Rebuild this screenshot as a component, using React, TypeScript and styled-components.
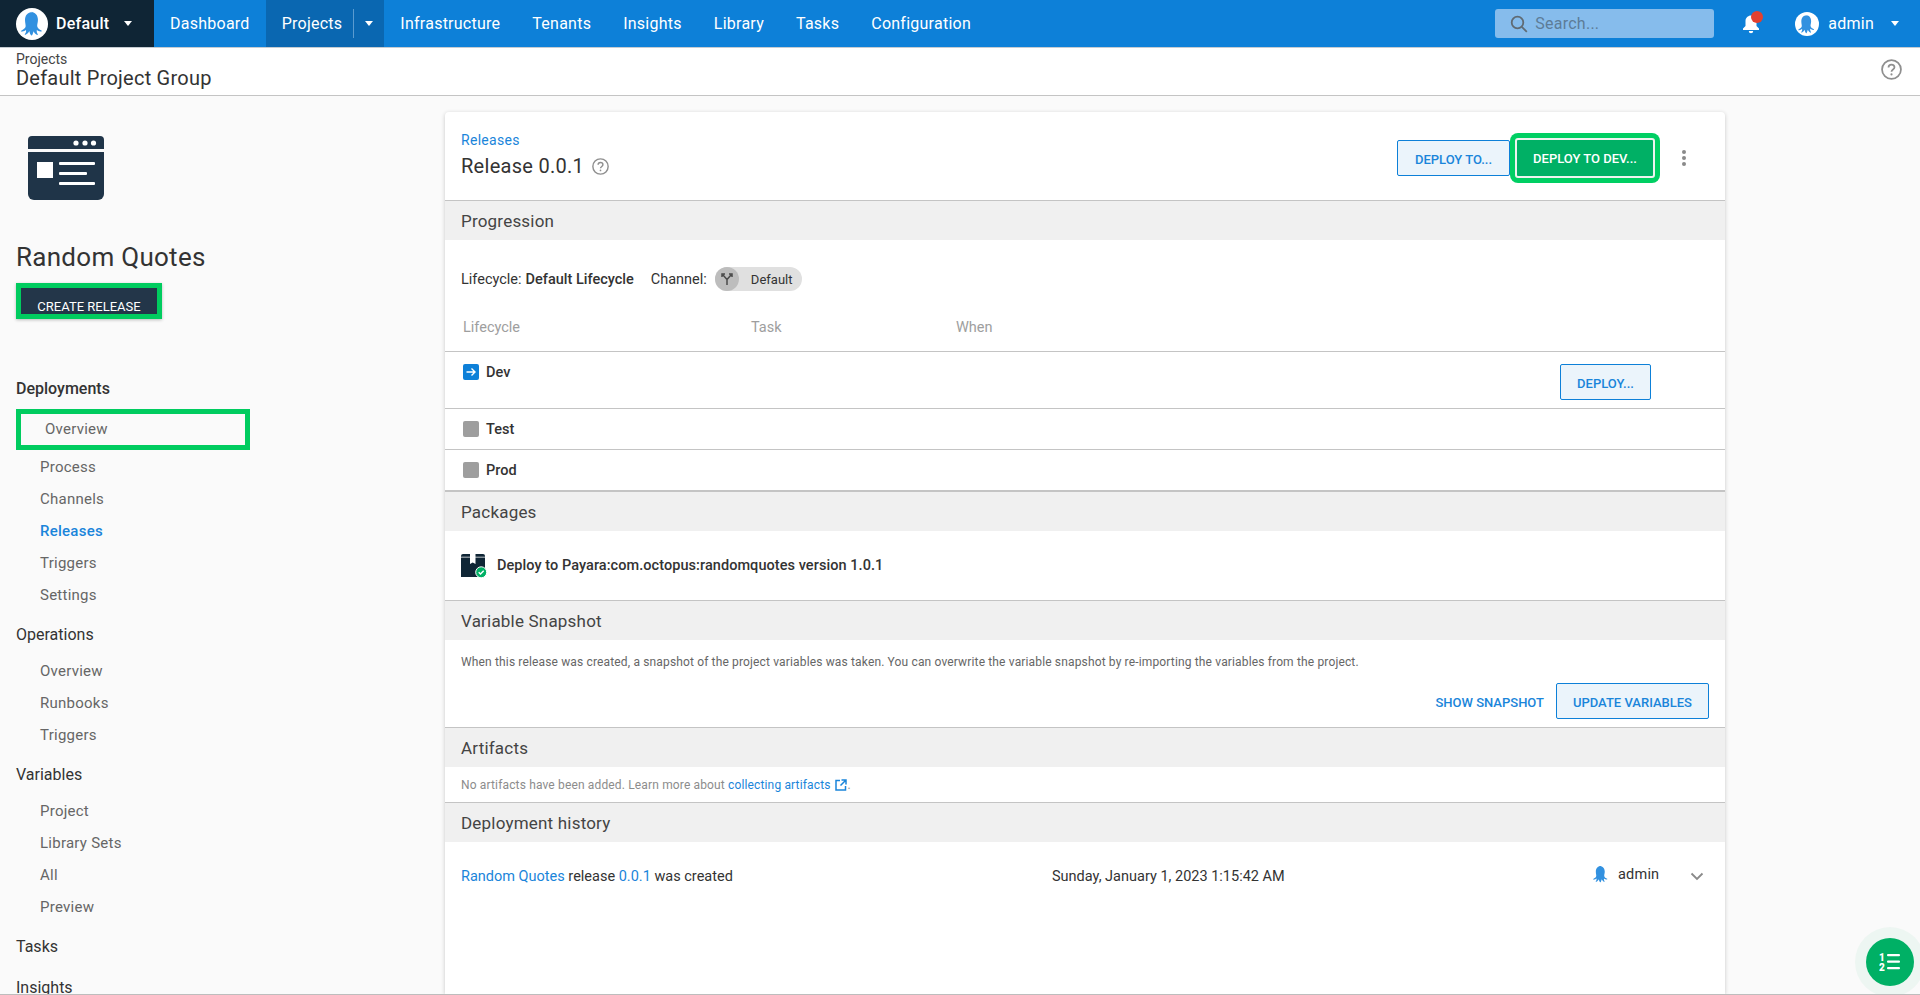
import React from "react";
import styled, { createGlobalStyle } from "styled-components";

const GlobalStyle = createGlobalStyle`
  html, body {
    margin: 0;
    height: 100%;
    overflow: hidden;
    background: #fafafa;
    font-family: Roboto, "Liberation Sans", sans-serif;
    color: #333;
  }
`;

const Page = styled.div`
  height: 995px;
  overflow: hidden;
  display: flex;
  flex-direction: column;
  box-sizing: border-box;
  border-bottom: 1px solid #bdbdbd;
  position: relative;
`;

const TopBar = styled.header`
  height: 48px;
  box-sizing: border-box;
  flex: none;
  display: flex;
  align-items: stretch;
  background: #0d80d8;
  color: #fff;
  font-size: 16px;
  letter-spacing: 0.25px;
  border-bottom: 1px solid #c5ccd2;
`;

const SpaceSwitch = styled.div`
  width: 154px;
  flex: none;
  background: #0f2535;
  display: flex;
  align-items: center;
  padding-left: 16px;
  box-sizing: border-box;
  font-weight: 500;
`;

const SpaceName = styled.span`
  margin-left: 8px;
`;

const Avatar = styled.span<{ $size: number }>`
  width: ${(p) => p.$size}px;
  height: ${(p) => p.$size}px;
  border-radius: 50%;
  background: #fff;
  display: flex;
  align-items: center;
  justify-content: center;
  flex: none;
`;

const Caret = styled.span<{ $left?: number }>`
  width: 0;
  height: 0;
  border-left: 4.5px solid transparent;
  border-right: 4.5px solid transparent;
  border-top: 5px solid #fff;
  margin-left: ${(p) => p.$left ?? 0}px;
`;

const NavItem = styled.a<{ $active?: boolean }>`
  display: flex;
  align-items: center;
  padding: ${(p) => (p.$active ? "0 11px 0 16px" : "0 16px")};
  background: ${(p) => (p.$active ? "#0a67b1" : "transparent")};
`;

const NavDivider = styled.span`
  width: 1px;
  height: 29px;
  background: #5a9bd0;
  margin: 0 11px 0 11px;
`;

const SearchBox = styled.div`
  margin: 9px 0 0 auto;
  width: 219px;
  height: 29px;
  border-radius: 3px;
  background: #86bcec;
  display: flex;
  align-items: center;
  padding-left: 15px;
  box-sizing: border-box;
  color: #5d7c98;
  gap: 7px;
`;

const Bell = styled.div`
  width: 24px;
  margin-left: 28px;
  display: flex;
  align-items: center;
  position: relative;
`;

const BellDot = styled.span`
  position: absolute;
  top: 11px;
  left: 9px;
  width: 12px;
  height: 12px;
  border-radius: 50%;
  background: #e2402f;
`;

const UserMenu = styled.div`
  display: flex;
  align-items: center;
  margin-left: 29px;
  padding-right: 21px;
`;

const UserName = styled.span`
  margin-left: 9px;
`;

const SubHeader = styled.div`
  height: 48px;
  flex: none;
  background: #fff;
  border-bottom: 1px solid #c4c4c4;
  box-sizing: border-box;
  padding: 3px 16px 0;
  display: flex;
  justify-content: space-between;
`;

const Crumb = styled.div`
  font-size: 14px;
  line-height: 16px;
  color: #444;
`;

const GroupTitle = styled.div`
  font-size: 20px;
  line-height: 23px;
  letter-spacing: 0.23px;
  color: #333;
`;

const HelpWrap = styled.div`
  margin: 8px 2px 0 0;
  color: #8f8f8f;
`;

const Body = styled.div`
  flex: 1;
  display: flex;
  min-height: 0;
`;

const Sidebar = styled.aside`
  width: 445px;
  flex: none;
  box-sizing: border-box;
  padding: 40px 16px 0;
`;

const ProjectLogo = styled.div`
  padding-left: 12px;
  height: 64px;
`;

const ProjectName = styled.h1`
  margin: 41px 0 0;
  font-size: 26px;
  font-weight: 400;
  line-height: 32px;
  letter-spacing: 0.28px;
  color: #333;
`;

const CreateButton = styled.div`
  margin-top: 10px;
  width: 146px;
  height: 36px;
  box-sizing: border-box;
  border: 5px solid #00cc5f;
  background: #233649;
  color: #fff;
  font-size: 13px;
  font-weight: 400;
  text-align: center;
  line-height: 38px;
  overflow: hidden;
  box-shadow: 0 1px 3px rgba(0, 0, 0, 0.25);
`;

const SideNav = styled.nav`
  margin-top: 54px;
`;

const NavHeading = styled.div<{ $strong?: boolean; $group?: boolean }>`
  height: 32px;
  line-height: 32px;
  margin-top: 8.5px;
  margin-bottom: ${(p) => (p.$group ? 3.5 : 0)}px;
  font-size: 16px;
  color: #333;
  font-weight: ${(p) => (p.$strong ? 500 : 400)};
`;

const NavLink = styled.div<{ $active?: boolean }>`
  height: 32px;
  line-height: 32px;
  padding-left: 24px;
  font-size: 15px;
  letter-spacing: 0.25px;
  color: ${(p) => (p.$active ? "#1a85da" : "#666")};
  font-weight: ${(p) => (p.$active ? 500 : 400)};
`;

const FocusLink = styled.div`
  width: 234px;
  height: 41px;
  box-sizing: border-box;
  border: 5px solid #00cc5f;
  padding-left: 24px;
  font-size: 15px;
  letter-spacing: 0.25px;
  line-height: 31px;
  color: #666;
  margin-bottom: 1px;
`;

const Card = styled.main`
  width: 1280px;
  margin-top: 16px;
  flex: none;
  background: #fff;
  border-radius: 4px 4px 0 0;
  box-shadow: 0 1px 4px rgba(0, 0, 0, 0.2);
  align-self: stretch;
`;

const CardHead = styled.div`
  height: 88px;
  box-sizing: border-box;
  padding: 18px 16px 0;
  display: flex;
  justify-content: space-between;
`;

const Breadcrumb = styled.a`
  display: block;
  font-size: 14px;
  letter-spacing: 0.3px;
  line-height: 20px;
  color: #1a85da;
`;

const TitleRow = styled.div`
  display: flex;
  align-items: center;
  gap: 8px;
  font-size: 20px;
  letter-spacing: 0.28px;
  line-height: 32px;
  color: #333;
`;

const TitleHelp = styled.span`
  display: flex;
  color: #8f8f8f;
`;

const HeadActions = styled.div`
  display: flex;
  align-items: flex-start;
  margin-right: 23px;
`;

const OutlineButton = styled.button`
  height: 36px;
  padding: 2px 16px 0;
  border: 1px solid #0d80d8;
  border-radius: 2px;
  background: #ebf4fb;
  color: #1a85da;
  font: 500 13px Roboto, sans-serif;
  text-transform: uppercase;
`;

const DeployToButton = styled(OutlineButton)`
  margin-top: 10px;
  width: 113px;
`;

const RowButton = styled(OutlineButton)`
  width: 91px;
`;

const Ring = styled.div`
  margin-top: 3px;
  padding: 5px;
  border-radius: 8px;
  background: #00cf63;
`;

const PrimaryButton = styled.button`
  display: block;
  width: 140px;
  height: 40px;
  padding: 1px 0 0;
  border: 2px solid #eef3ef;
  border-radius: 3px;
  background: #00b065;
  color: #fff;
  font: 500 13px Roboto, sans-serif;
  text-transform: uppercase;
`;

const MenuDots = styled.div`
  margin: 20px 0 0 22px;
  display: flex;
  flex-direction: column;
  gap: 2px;
`;

const Dot = styled.span`
  width: 4px;
  height: 4px;
  border-radius: 50%;
  background: #8a8a8a;
`;

const SectionBand = styled.h2<{ $heavy?: boolean }>`
  margin: 0;
  height: ${(p) => (p.$heavy ? 41 : 40)}px;
  box-sizing: border-box;
  padding-left: 16px;
  background: #f0f0f0;
  border-top: ${(p) => (p.$heavy ? 2 : 1)}px solid #c4c4c4;
  font-size: 17px;
  font-weight: 400;
  line-height: 40px;
  letter-spacing: 0.2px;
  color: #444;
`;

const MetaLine = styled.div`
  height: 69px;
  padding: 9px 16px 0;
  display: flex;
  align-items: center;
  box-sizing: border-box;
  font-size: 14.5px;
`;

const Bold = styled.b`
  font-weight: 500;
  margin-left: 4px;
`;

const ChannelLabel = styled.span`
  margin: 0 8px 0 17px;
`;

const Chip = styled.span`
  width: 87px;
  height: 24px;
  border-radius: 12px;
  background: #e0e0e0;
  display: flex;
  align-items: center;
  font-size: 13px;
`;

const ChipIcon = styled.span`
  width: 24px;
  height: 24px;
  border-radius: 50%;
  background: #bdbdbd;
  display: flex;
  align-items: center;
  justify-content: center;
  margin-right: 12px;
`;

const TableHead = styled.div`
  height: 42px;
  display: grid;
  grid-template-columns: 288px 205px 1fr;
  padding: 0 18px 6px;
  align-items: center;
  box-sizing: border-box;
  color: #9e9e9e;
  font-size: 14.5px;
`;

const StageRow = styled.div<{ $tall?: boolean }>`
  height: ${(p) => (p.$tall ? 57 : 41)}px;
  box-sizing: border-box;
  border-top: 1px solid #c4c4c4;
  padding: ${(p) => (p.$tall ? "12px 74px 0 18px" : "0 18px")};
  display: flex;
  align-items: ${(p) => (p.$tall ? "flex-start" : "center")};
  justify-content: space-between;
`;

const StageName = styled.div`
  display: flex;
  align-items: flex-start;
  height: 16px;
  gap: 7px;
  font-size: 14.5px;
  font-weight: 500;
  color: #333;
  line-height: 18px;
`;

const StageStatus = styled.span<{ $running?: boolean }>`
  width: 16px;
  height: 16px;
  border-radius: 2px;
  background: ${(p) => (p.$running ? "#0d80d8" : "#9e9e9e")};
  display: flex;
  align-items: center;
  justify-content: center;
`;

const PackageRow = styled.div`
  height: 69px;
  padding: 0 16px;
  display: flex;
  align-items: center;
  gap: 10px;
  font-size: 14.5px;
  letter-spacing: 0.06px;
  font-weight: 500;
  color: #333;
`;

const SmallNote = styled.div`
  padding: 14px 16px 0;
  font-size: 12px;
  letter-spacing: 0.15px;
  line-height: 16px;
  color: #666;
`;

const SnapshotBody = styled.div`
  height: 87px;
`;

const SnapshotActions = styled.div`
  margin: 13px 16px 0;
  display: flex;
  justify-content: flex-end;
  align-items: center;
  gap: 12px;
`;

const TextButton = styled.span`
  color: #1a85da;
  font-size: 13px;
  font-weight: 500;
  text-transform: uppercase;
  padding-top: 2px;
`;

const ArtifactsBody = styled.div`
  height: 35px;
  padding: 0 16px;
  display: flex;
  align-items: center;
  font-size: 12px;
  letter-spacing: 0.15px;
  color: #8c8c8c;
`;

const InlineLink = styled.a<{ $flush?: boolean }>`
  color: #1a85da;
  margin-left: ${(p) => (p.$flush ? 0 : 3)}px;
`;

const ExternalIcon = styled.span`
  display: flex;
  color: #1a85da;
  margin: 0 1px 0 4px;
`;

const HistoryRow = styled.div`
  height: 68px;
  box-sizing: border-box;
  padding: 1px 16px 0;
  display: grid;
  grid-template-columns: 591px 541px 97px 1fr;
  align-items: center;
  font-size: 14.5px;
  color: #333;
`;

const HistoryUser = styled.div`
  display: flex;
  align-items: center;
  gap: 7px;
  margin: -5px 0 0 -2px;
  font-size: 14.5px;
  letter-spacing: 0.2px;
`;

const HistoryChevron = styled.div`
  display: flex;
  color: #8a8a8a;
`;

const Fab = styled.div`
  position: absolute;
  right: 6px;
  bottom: 8px;
  width: 48px;
  height: 48px;
  border-radius: 50%;
  background: #00b065;
  box-shadow: 0 0 0 11px rgba(0, 176, 101, 0.05);
  display: flex;
  align-items: center;
  justify-content: center;
`;

const OCTOPUS =
  "M12 2.500C7.800 2.500 5.800 5.600 5.800 9.200c0 2.600.7 3.900.5 5.300-.2 1.500-1.900 2.600-3.600 3.400-.6.4-.2.9.7.8 1.400-.1 2.400-.8 3.200-1.300.4 1.200-.2 2.500-.9 3.300-.4.6.2.9.9.5 1.400-.7 2.200-1.900 2.800-2.900.3 1.300.5 2.500 1.400 3.400.4.400.7.400 1-.1.500-1 .7-2.200 1.100-3.200.5 1 1.300 2.300 2.600 2.900.7.300 1.200 0 .8-.6-.6-.9-1-2.200-.7-3.400.8.5 1.800 1.200 3.100 1.300.9.1 1.300-.4.700-.8-1.600-.8-3.300-1.900-3.500-3.500-.2-1.400.6-2.700.6-5.300 0-3.600-2.100-6.700-6.500-6.700z";

const Octopus = ({ size }: { size: number }) => (
  <svg width={size} height={size} viewBox="0 0 24 24">
    <path d={OCTOPUS} fill="#3291e0" />
  </svg>
);

const Help = ({ size }: { size: number }) => (
  <svg width={size} height={size} viewBox="0 0 24 24" fill="none" stroke="currentColor">
    <circle cx="12" cy="12" r="10.800" strokeWidth="2" />
    <path d="M8.600 9.600c0-2 1.500-3.200 3.400-3.200s3.400 1.200 3.400 3c0 2.600-3.400 2.500-3.400 5.200" strokeWidth="2" />
    <circle cx="12" cy="17.600" r="1.200" fill="currentColor" stroke="none" />
  </svg>
);

const ReleaseIcon = () => (
  <svg width="76" height="64" viewBox="0 0 76 64">
    <path d="M4 0h68a4 4 0 0 1 4 4v9H0V4a4 4 0 0 1 4-4z" fill="#1f3448" />
    <path d="M0 16h76v42a6 6 0 0 1-6 6H6a6 6 0 0 1-6-6z" fill="#1f3448" />
    <circle cx="48" cy="7" r="2.600" fill="#fff" />
    <circle cx="57" cy="7" r="2.600" fill="#fff" />
    <circle cx="65.500" cy="7" r="2.600" fill="#fff" />
    <rect x="9" y="26" width="16" height="16" fill="#fff" />
    <rect x="31" y="26" width="36" height="3" rx="1" fill="#fff" />
    <rect x="31" y="36" width="28" height="3" rx="1" fill="#fff" />
    <rect x="31" y="46" width="36" height="3" rx="1" fill="#fff" />
  </svg>
);

const PackageIcon = () => (
  <svg width="26" height="24" viewBox="0 0 26 24">
    <path d="M2 0h7v2.800H0V2a2 2 0 0 1 2-2zM14.500 0H22a2 2 0 0 1 2 2v.8h-9.500z" fill="#0f2535" />
    <path d="M0 3.600h9V10l2.750-1.500L14.500 10V3.600H24V23H0z" fill="#0f2535" />
    <circle cx="20.200" cy="18.300" r="5.500" fill="#00b065" stroke="#fff" strokeWidth="1" />
    <path d="M17.700 18.300l1.800 1.800 3.200-3.400" fill="none" stroke="#fff" strokeWidth="1.400" />
  </svg>
);

const Releases = () => (
  <Page>
    <GlobalStyle />
    <TopBar>
      <SpaceSwitch>
        <Avatar $size={32}>
          <Octopus size={29} />
        </Avatar>
        <SpaceName>Default</SpaceName>
        <Caret $left={15} />
      </SpaceSwitch>
      <NavItem>Dashboard</NavItem>
      <NavItem $active>
        Projects
        <NavDivider />
        <Caret />
      </NavItem>
      <NavItem>Infrastructure</NavItem>
      <NavItem>Tenants</NavItem>
      <NavItem>Insights</NavItem>
      <NavItem>Library</NavItem>
      <NavItem>Tasks</NavItem>
      <NavItem>Configuration</NavItem>
      <SearchBox>
        <svg width="18" height="18" viewBox="0 0 18 18" fill="none" stroke="#5f6a73" strokeWidth="1.800">
          <circle cx="7.500" cy="7.500" r="5.800" />
          <path d="M11.800 11.800l5 5" />
        </svg>
        Search...
      </SearchBox>
      <Bell>
        <svg width="18" height="20" viewBox="0 0 18 20" fill="#fff">
          <path d="M9 1.500c-3 0-5.500 2.400-5.500 5.500v5L1 14.500V16h16v-1.500L14.500 12V7c0-3.100-2.500-5.500-5.500-5.500z" />
          <path d="M6.800 17h4.400a2.200 2.200 0 0 1-4.400 0z" />
        </svg>
        <BellDot />
      </Bell>
      <UserMenu>
        <Avatar $size={24}>
          <Octopus size={22} />
        </Avatar>
        <UserName>admin</UserName>
        <Caret $left={17} />
      </UserMenu>
    </TopBar>
    <SubHeader>
      <div>
        <Crumb>Projects</Crumb>
        <GroupTitle>Default Project Group</GroupTitle>
      </div>
      <HelpWrap>
        <Help size={21} />
      </HelpWrap>
    </SubHeader>
    <Body>
      <Sidebar>
        <ProjectLogo>
          <ReleaseIcon />
        </ProjectLogo>
        <ProjectName>Random Quotes</ProjectName>
        <CreateButton>CREATE RELEASE</CreateButton>
        <SideNav>
          <NavHeading $strong $group>
            Deployments
          </NavHeading>
          <FocusLink>Overview</FocusLink>
          <NavLink>Process</NavLink>
          <NavLink>Channels</NavLink>
          <NavLink $active>Releases</NavLink>
          <NavLink>Triggers</NavLink>
          <NavLink>Settings</NavLink>
          <NavHeading $group>Operations</NavHeading>
          <NavLink>Overview</NavLink>
          <NavLink>Runbooks</NavLink>
          <NavLink>Triggers</NavLink>
          <NavHeading $group>Variables</NavHeading>
          <NavLink>Project</NavLink>
          <NavLink>Library Sets</NavLink>
          <NavLink>All</NavLink>
          <NavLink>Preview</NavLink>
          <NavHeading>Tasks</NavHeading>
          <NavHeading>Insights</NavHeading>
        </SideNav>
      </Sidebar>
      <Card>
        <CardHead>
          <div>
            <Breadcrumb>Releases</Breadcrumb>
            <TitleRow>
              Release 0.0.1
              <TitleHelp>
                <Help size={17} />
              </TitleHelp>
            </TitleRow>
          </div>
          <HeadActions>
            <DeployToButton>Deploy to...</DeployToButton>
            <Ring>
              <PrimaryButton>Deploy to Dev...</PrimaryButton>
            </Ring>
            <MenuDots>
              <Dot />
              <Dot />
              <Dot />
            </MenuDots>
          </HeadActions>
        </CardHead>
        <SectionBand>Progression</SectionBand>
        <MetaLine>
          Lifecycle:<Bold>Default Lifecycle</Bold>
          <ChannelLabel>Channel:</ChannelLabel>
          <Chip>
            <ChipIcon>
              <svg width="14" height="14" viewBox="0 0 14 14" fill="none" stroke="#4a4a4a" strokeWidth="1.500">
                <path d="M7 13V7.500L3 3M7 7.500L11 3M2 5V2h3M9 2h3v3" />
              </svg>
            </ChipIcon>
            Default
          </Chip>
        </MetaLine>
        <TableHead>
          <span>Lifecycle</span>
          <span>Task</span>
          <span>When</span>
        </TableHead>
        <StageRow $tall>
          <StageName>
            <StageStatus $running>
              <svg width="12" height="12" viewBox="0 0 12 12" fill="none" stroke="#fff" strokeWidth="1.400">
                <path d="M1.500 6h8.500M6.500 2.500L10 6l-3.500 3.500" />
              </svg>
            </StageStatus>
            Dev
          </StageName>
          <RowButton>Deploy...</RowButton>
        </StageRow>
        <StageRow>
          <StageName>
            <StageStatus />
            Test
          </StageName>
        </StageRow>
        <StageRow>
          <StageName>
            <StageStatus />
            Prod
          </StageName>
        </StageRow>
        <SectionBand $heavy>Packages</SectionBand>
        <PackageRow>
          <PackageIcon />
          Deploy to Payara:com.octopus:randomquotes version 1.0.1
        </PackageRow>
        <SectionBand>Variable Snapshot</SectionBand>
        <SnapshotBody>
          <SmallNote>
            When this release was created, a snapshot of the project variables was taken. You can overwrite the variable
            snapshot by re-importing the variables from the project.
          </SmallNote>
          <SnapshotActions>
            <TextButton>Show Snapshot</TextButton>
            <OutlineButton>Update Variables</OutlineButton>
          </SnapshotActions>
        </SnapshotBody>
        <SectionBand>Artifacts</SectionBand>
        <ArtifactsBody>
          No artifacts have been added. Learn more about <InlineLink>collecting artifacts</InlineLink>
          <ExternalIcon>
            <svg width="12" height="12" viewBox="0 0 12 12" fill="none" stroke="currentColor" strokeWidth="1.500">
              <path d="M5 1.500H1v9.500h9.500V7M6.500 1h4.500v4.500M11 1L5.500 6.500" />
            </svg>
          </ExternalIcon>
          .
        </ArtifactsBody>
        <SectionBand>Deployment history</SectionBand>
        <HistoryRow>
          <span>
            <InlineLink $flush>Random Quotes</InlineLink> release <InlineLink $flush>0.0.1</InlineLink> was created
          </span>
          <span>Sunday, January 1, 2023 1:15:42 AM</span>
          <HistoryUser>
            <Octopus size={20} />
            admin
          </HistoryUser>
          <HistoryChevron>
            <svg width="14" height="9" viewBox="0 0 14 9" fill="none" stroke="currentColor" strokeWidth="1.800">
              <path d="M1.500 1.500L7 7l5.500-5.500" />
            </svg>
          </HistoryChevron>
        </HistoryRow>
      </Card>
    </Body>
    <Fab>
      <svg width="22" height="20" viewBox="0 0 22 20" fill="#fff" fontFamily="Roboto, sans-serif" fontWeight="900" fontSize="10">
        <text x="0" y="9">1</text>
        <text x="0" y="18.500">2</text>
        <rect x="8" y="2" width="13" height="2.200" rx="1" />
        <rect x="8" y="8.500" width="13" height="2.200" rx="1" />
        <rect x="8" y="15" width="13" height="2.200" rx="1" />
      </svg>
    </Fab>
  </Page>
);

export default Releases;
